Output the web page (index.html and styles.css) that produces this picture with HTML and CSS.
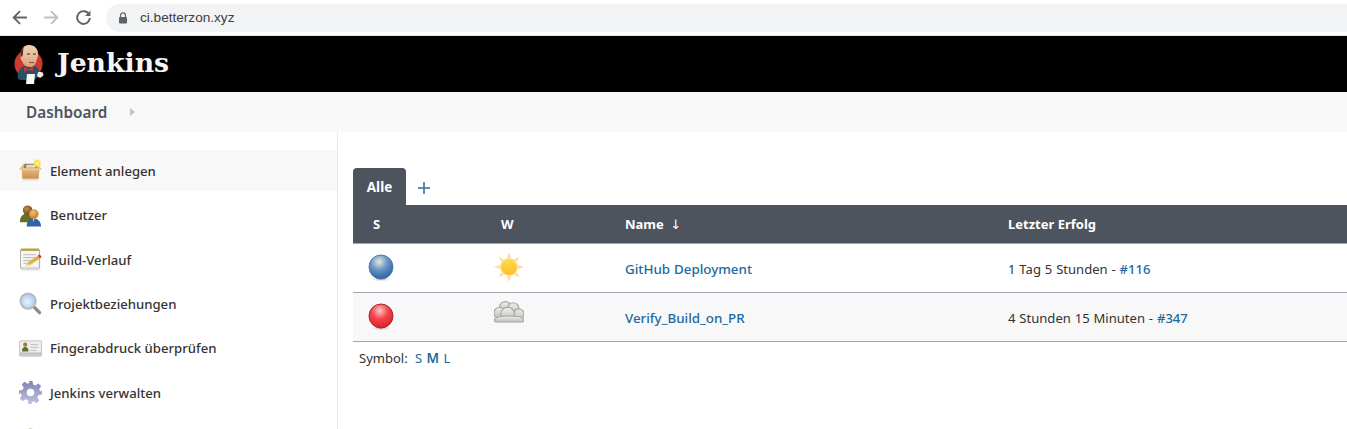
FILE: index.html
```html
<!DOCTYPE html>
<html lang="de">
<head>
  <meta charset="UTF-8" />
  <title>Dashboard [Jenkins]</title>
  <link rel="stylesheet" href="styles.css">
</head>
<body>
  <div class="browser-bar">
    <svg class="nav-icon" viewBox="0 0 16 16"><path d="M15 8H3M8.500 2 2.500 8l6 6" fill="none" stroke="#5f6368" stroke-width="1.700"/></svg>
    <svg class="nav-icon" viewBox="0 0 16 16"><path d="M1 8h12M7.500 2l6 6-6 6" fill="none" stroke="#bdc1c6" stroke-width="1.700"/></svg>
    <svg class="nav-icon" viewBox="0 0 16 16"><path d="M13.200 5A6 6 0 1 0 14 8.500" fill="none" stroke="#5f6368" stroke-width="1.800"/><path d="M14.500 1.500v5h-5z" fill="#5f6368"/></svg>
    <div class="address">
      <svg class="lock" viewBox="0 0 10 12"><path d="M2.500 5V3.400a2.500 2.500 0 0 1 5 0V5" fill="none" stroke="#5f6368" stroke-width="1.200"/><rect x="1" y="5" width="8" height="6.500" rx="1" fill="#5f6368"/></svg>
      <span>ci.betterzon.xyz</span>
    </div>
  </div>

  <header class="header">
    <svg class="logo" viewBox="0 0 30 40">
      <defs>
        <linearGradient id="skin" x1="0" y1="0" x2="0" y2="1"><stop offset="0" stop-color="#f3d3b8"/><stop offset="1" stop-color="#d9a27f"/></linearGradient>
      </defs>
      <circle cx="14.500" cy="20" r="14" fill="#cf3a2f"/>
      <path d="M4 35c-1-6 1-11 6-13l5 1 6-1c4 2 5 6 4 11l-3 1-1 2H7z" fill="#2a5068"/>
      <path d="M7 12C6 6 9 1 15 1c6 0 9 4 9 9 0 3-1 5-2 8-1 3-3 5-6 5-4 0-7-3-8-6-1-1-2-3-1-5z" fill="url(#skin)"/>
      <path d="M7 12c-1-5 1-8 3-10-1 3-1 6-1 8l-1 3z" fill="#4b3328"/>
      <path d="M13 10h3M19 10h3" stroke="#3a2a22"/>
      <path d="M15 18c2 1 4 1 5 0" stroke="#7d3c30" fill="none"/>
      <path d="M10 23l4 2 5-2 0 4-5-1-4 2z" fill="#d3322a"/>
      <path d="M13 30h8l-1 10h-8z" fill="#f7f6f0"/>
      <path d="M24 28h3c2 0 3 2 2 4l-3 2-3-2z" fill="#f0e8dc"/>
    </svg>
    <span class="brand">Jenkins</span>
  </header>

  <nav class="breadcrumbs">
    <a class="crumb">Dashboard</a>
    <span class="crumb-arrow"></span>
  </nav>

  <div class="main">
    <aside class="side-panel">
      <a class="task task-active">
        <svg class="task-icon" viewBox="0 0 24 24">
          <defs>
            <linearGradient id="box" x1="0" y1="0" x2="0" y2="1"><stop offset="0" stop-color="#e6bd80"/><stop offset="1" stop-color="#c8924c"/></linearGradient>
            <radialGradient id="bulb"><stop offset="0" stop-color="#fffbb0"/><stop offset="0.600" stop-color="#f7e23a"/><stop offset="1" stop-color="#f7e96a" stop-opacity="0.300"/></radialGradient>
          </defs>
          <path d="M5 5h14l3 5H2z" fill="#8f7658"/>
          <path d="M8 6h9v3H7z" fill="#e6ddc8"/>
          <path d="M0 11l5-6 1 1-2 5zM24 11l-5-6-1 1 2 5z" fill="#e2bc84"/>
          <path d="M2.500 10h19l-1 10.500h-17z" fill="url(#box)"/>
          <path d="M2 10h20v1.500H2z" fill="#eccb96"/>
          <path d="M4 21h16v1.500H4z" fill="#ddd"/>
          <circle cx="19" cy="4.500" r="4.500" fill="url(#bulb)"/>
        </svg>
        <span>Element anlegen</span>
      </a>
      <a class="task">
        <svg class="task-icon" viewBox="0 0 24 24">
          <defs>
            <radialGradient id="face1" cx="0.400" cy="0.350"><stop offset="0" stop-color="#c28e4c"/><stop offset="1" stop-color="#7d5522"/></radialGradient>
            <radialGradient id="face2" cx="0.400" cy="0.350"><stop offset="0" stop-color="#f2c078"/><stop offset="1" stop-color="#d38a34"/></radialGradient>
          </defs>
          <path d="M1 19c0-6 3-9 8-9s7 3 7 9z" fill="#64701f"/>
          <circle cx="9" cy="6.500" r="5" fill="url(#face1)"/>
          <path d="M8 23.500c0-6 3-8.500 7-8.500s8 2.500 8 8.500z" fill="#2f62a6"/>
          <path d="M14.500 15h1.500l-.7 4z" fill="#e8eef4"/>
          <circle cx="15.500" cy="10.500" r="5" fill="url(#face2)"/>
        </svg>
        <span>Benutzer</span>
      </a>
      <a class="task">
        <svg class="task-icon" viewBox="0 0 24 24">
          <path d="M1.500 2h20v19h-20z" fill="#f5f5f3" stroke="#a9a9a4"/>
          <path d="M2 21.500h20l-1 2H3z" fill="#ddd"/>
          <path d="M2 0.500h19v2.500H2z" fill="#b9a24a"/>
          <path d="M4.500 7h13M4.500 10h13M4.500 13h9M4.500 16h5" stroke="#b9b9b9"/>
          <path d="M7 19l1.500-3.500L19.500 8l2.500 3-11 7z" fill="#e5b04a"/>
          <path d="M7 19l1.500-3.500 2.500 2.500z" fill="#f3dfb5"/>
          <path d="M19.500 8l2-1.500 2 2.500-1.500 2z" fill="#d33a30"/>
        </svg>
        <span>Build-Verlauf</span>
      </a>
      <a class="task">
        <svg class="task-icon" viewBox="0 0 24 24">
          <defs>
            <radialGradient id="glass" cx="0.450" cy="0.550"><stop offset="0" stop-color="#eaf3fb"/><stop offset="1" stop-color="#aecbee"/></radialGradient>
          </defs>
          <path d="M14.500 14.500l7 7" stroke="#8a8a8a" stroke-width="3.500" stroke-linecap="round"/>
          <circle cx="9.500" cy="9.500" r="8" fill="url(#glass)" stroke="#b5bbc2" stroke-width="2"/>
        </svg>
        <span>Projektbeziehungen</span>
      </a>
      <a class="task">
        <svg class="task-icon" viewBox="0 0 24 24">
          <rect x="0.500" y="4" width="23" height="16" rx="1" fill="#efeeea" stroke="#c2c2bd"/>
          <rect x="1" y="16" width="22" height="3.500" fill="#c5c5c1"/>
          <circle cx="6.500" cy="8" r="2.200" fill="#a67a3a"/>
          <path d="M3 15c0-3 1.500-4.500 3.500-4.500S10 12 10 15z" fill="#5f6e28"/>
          <path d="M12 8h8M12 11h8M12 14h6" stroke="#bdbdbd"/>
        </svg>
        <span>Fingerabdruck überprüfen</span>
      </a>
      <a class="task">
        <svg class="task-icon" viewBox="0 0 24 24">
          <defs>
            <linearGradient id="gear" x1="0" y1="0" x2="0" y2="1"><stop offset="0" stop-color="#7f85b4"/><stop offset="1" stop-color="#c0c2dc"/></linearGradient>
          </defs>
          <path fill="url(#gear)" fill-rule="evenodd" d="M10 0h4l.8 3.600 2.400 1 3.100-2 2.800 2.800-2 3.100 1 2.400L24 10v4l-3.900.800-1 2.400 2 3.100-2.800 2.800-3.100-2-2.400 1L14 24h-4l-.8-3.900-2.400-1-3.100 2-2.800-2.800 2-3.100-1-2.400L0 14v-4l3.900-.800 1-2.400-2-3.100 2.800-2.800 3.100 2 2.400-1zM12 8a4 4 0 1 0 0 8 4 4 0 0 0 0-8z"/>
        </svg>
        <span>Jenkins verwalten</span>
      </a>
      <a class="task">
        <svg class="task-icon" viewBox="0 0 24 24">
          <path d="M8 10l4-6 4 6z" fill="#b98a4a"/>
          <circle cx="12" cy="7" r="4.500" fill="#b98a4a"/>
        </svg>
        <span></span>
      </a>
    </aside>

    <section class="content">
      <div class="tabs">
        <div class="tab">Alle</div>
        <svg class="add-tab" viewBox="0 0 12 12"><path d="M6 0v12M0 6h12" stroke="#2b6f9f" stroke-width="1.500"/></svg>
      </div>
      <table class="projects">
        <thead>
          <tr>
            <th class="col-s">S</th>
            <th class="col-w">W</th>
            <th class="col-name">Name <span class="sort-arrow">↓</span></th>
            <th>Letzter Erfolg</th>
          </tr>
        </thead>
        <tbody>
          <tr>
            <td class="ball-cell">
              <svg class="ball" viewBox="0 0 26 28">
                <defs>
                  <radialGradient id="blue" cx="0.420" cy="0.280" r="0.750"><stop offset="0" stop-color="#e3e8dc"/><stop offset="0.450" stop-color="#6d96c8"/><stop offset="1" stop-color="#2b5c9e"/></radialGradient>
                  <radialGradient id="shadow"><stop offset="0" stop-color="#999"/><stop offset="1" stop-color="#fff" stop-opacity="0"/></radialGradient>
                </defs>
                <ellipse cx="13" cy="25" rx="12" ry="3" fill="url(#shadow)"/>
                <circle cx="13" cy="13" r="12" fill="url(#blue)" stroke="#4f79a8"/>
              </svg>
            </td>
            <td class="weather-cell">
              <svg class="weather" viewBox="0 0 30 30">
                <defs>
                  <linearGradient id="sun" x1="0" y1="0" x2="0" y2="1"><stop offset="0" stop-color="#ffdc4a"/><stop offset="1" stop-color="#fdbb2c"/></linearGradient>
                </defs>
                <path fill="#fddc9c" d="M15 0l2 6h-4zM15 30l-2-6h4zM0 15l6-2v4zM30 15l-6 2v-4zM4.500 4.500l5.500 3-2.500 2.500zM25.500 25.500l-5.500-3 2.500-2.500zM25.500 4.500l-3 5.500-2.500-2.500zM4.500 25.500l3-5.500 2.500 2.500z"/>
                <circle cx="15" cy="15" r="8.500" fill="url(#sun)" stroke="#fde7a8"/>
              </svg>
            </td>
            <td class="job"><a>GitHub Deployment</a></td>
            <td>1 Tag 5 Stunden - <a>#116</a></td>
          </tr>
          <tr class="row-alt">
            <td class="ball-cell">
              <svg class="ball" viewBox="0 0 26 28">
                <defs>
                  <radialGradient id="red" cx="0.450" cy="0.280" r="0.750"><stop offset="0" stop-color="#fbc9c9"/><stop offset="0.450" stop-color="#f4474d"/><stop offset="1" stop-color="#d81c26"/></radialGradient>
                </defs>
                <ellipse cx="13" cy="25" rx="12" ry="3" fill="url(#shadow)"/>
                <circle cx="13" cy="13" r="12" fill="url(#red)" stroke="#a52a30"/>
              </svg>
            </td>
            <td class="weather-cell">
              <svg class="weather" viewBox="2 3.500 26.500 26.500">
                <defs>
                  <linearGradient id="cloud" x1="0" y1="0" x2="0" y2="1"><stop offset="0" stop-color="#f0f0ee"/><stop offset="1" stop-color="#bdbdba"/></linearGradient>
                </defs>
                <g fill="url(#cloud)" stroke="#a3a3a0">
                  <circle cx="12" cy="9" r="5"/>
                  <circle cx="19" cy="10" r="5"/>
                  <circle cx="7" cy="14" r="5"/>
                  <circle cx="24" cy="15" r="4.500"/>
                  <circle cx="14" cy="15" r="6"/>
                  <path d="M3 19c3-3 22-3 25 0 1 1 1 3-1 3H4c-2 0-2-2-1-3z"/>
                </g>
              </svg>
            </td>
            <td class="job"><a>Verify_Build_on_PR</a></td>
            <td>4 Stunden 15 Minuten - <a>#347</a></td>
          </tr>
        </tbody>
      </table>
      <div class="symbol-size">Symbol: <a class="first">S</a> <a class="current">M</a> <a>L</a></div>
    </section>
  </div>
</body>
</html>
```

FILE: styles.css
```css
html, body {
  height: 429px;
  overflow: hidden;
}

body {
  font-family: "Noto Sans", "Open Sans", sans-serif;
  font-size: 13px;
  color: #333;
  background-color: #fff;
  margin: 0;
  padding: 0;
}

a {
  color: #20699f;
  text-decoration: none;
}

.browser-bar {
  display: flex;
  align-items: center;
  height: 35px;
  padding-left: 11px;
  border-bottom: 1px solid #e8e8e8;
  gap: 15px;
}

.nav-icon {
  width: 17px;
  height: 17px;
}

.address {
  display: flex;
  align-items: center;
  flex: 1;
  height: 28px;
  margin-left: -1px;
  padding-left: 12px;
  background-color: #f1f3f4;
  border-radius: 14px 0 0 14px;
  font-family: "Liberation Sans", Arial, sans-serif;
  font-size: 13.600px;
  color: #3c4043;
  gap: 12px;
}

.lock {
  width: 10px;
  height: 12px;
}

.header {
  display: flex;
  align-items: center;
  height: 56px;
  padding-left: 14px;
  background-color: #000;
}

.logo {
  width: 30px;
  height: 40px;
}

.brand {
  margin-left: 13px;
  padding-bottom: 3px;
  font-family: "DejaVu Serif", Georgia, serif;
  font-weight: bold;
  font-size: 26.700px;
  color: #f5f5f5;
}

.breadcrumbs {
  display: flex;
  align-items: center;
  height: 40px;
  padding-left: 26px;
  background-color: #f8f8f8;
}

.crumb {
  font-size: 15.300px;
  font-weight: 600;
  color: #4d545d;
}

.crumb-arrow {
  margin-left: 23px;
  border-left: 5px solid #c3c3c3;
  border-top: 4px solid transparent;
  border-bottom: 4px solid transparent;
}

.main {
  display: flex;
}

.side-panel {
  flex: none;
  width: 338px;
  height: 297px;
  padding-top: 18px;
  box-sizing: border-box;
  border-right: 1px solid #e8e8e8;
  overflow: hidden;
}

.task {
  display: flex;
  align-items: center;
  height: 44.400px;
  padding-left: 19px;
  color: #333;
  font-size: 13.150px;
  font-weight: 500;
  gap: 8px;
}

.task-active {
  height: 41px;
  margin-bottom: 2px;
  background-color: #f8f8f8;
}

.task-icon {
  width: 23px;
  height: 23px;
}

.content {
  flex: 1;
  padding: 36px 0 0 15px;
}

.tabs {
  display: flex;
  align-items: center;
}

.tab {
  width: 53px;
  height: 37px;
  line-height: 38px;
  text-align: center;
  background-color: #4d545d;
  border-radius: 4px 4px 0 0;
  color: #fff;
  font-size: 13.500px;
  font-weight: 700;
}

.add-tab {
  width: 12px;
  height: 12px;
  margin: 2px 0 0 12px;
}

.projects {
  width: 100%;
  border-collapse: collapse;
  table-layout: fixed;
}

.projects th {
  height: 38px;
  padding: 1px 0 0;
  box-sizing: border-box;
  text-align: left;
  background-color: #4d545d;
  border-bottom: 1px solid #9aa7b2;
  color: #fff;
  font-size: 13px;
  font-weight: 700;
}

.sort-arrow {
  margin-left: 3px;
  font-family: "DejaVu Sans", sans-serif;
  font-size: 13px;
  font-weight: 400;
}

.projects td {
  height: 49px;
  padding: 3px 0 0;
  box-sizing: border-box;
  font-size: 13.050px;
  word-spacing: 0.500px;
  border-bottom: 1px solid #9aa7b2;
}

.projects td a {
  font-weight: 500;
}

.projects .col-s {
  width: 148px;
  padding-left: 20px;
}

.projects .col-w {
  width: 124px;
}

.projects .col-name {
  width: 383px;
}

.row-alt td {
  background-color: #f8f8f8;
}

.projects .ball-cell {
  padding: 0 0 0 15px;
}

.ball {
  display: block;
  width: 26px;
  height: 28px;
}

.projects .weather-cell {
  padding: 0;
}

.weather {
  display: block;
  width: 30px;
  height: 30px;
  margin: -2px 0 0 -7px;
}

.projects .job a {
  font-size: 13.350px;
}

.symbol-size {
  margin: 7px 0 0 6px;
  font-size: 13px;
  word-spacing: 1px;
}

.symbol-size a {
  font-size: 13px;
}

.symbol-size a.first {
  margin-left: 3px;
}

.symbol-size a.current {
  font-size: 13.500px;
  font-weight: 600;
}
```
